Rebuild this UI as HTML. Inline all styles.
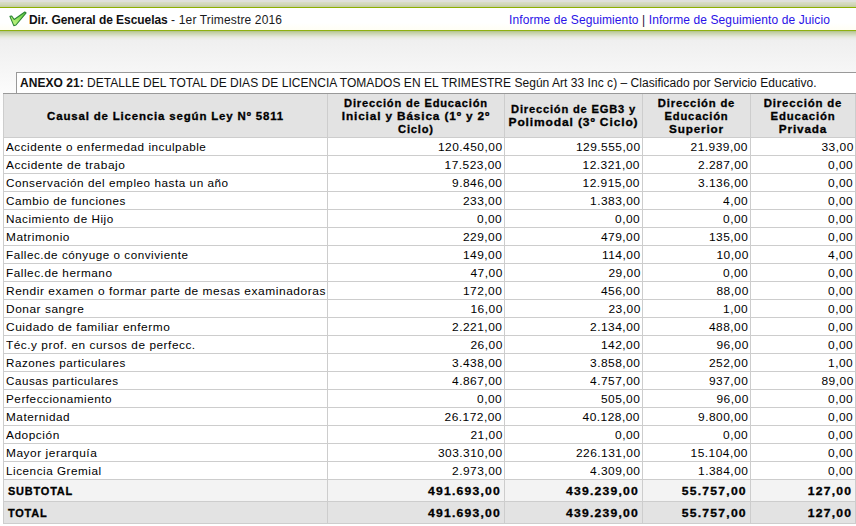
<!DOCTYPE html><html><head><meta charset="utf-8"><style>
*{margin:0;padding:0;box-sizing:border-box}
html,body{width:856px;height:526px;overflow:hidden}
body{position:relative;font-family:"Liberation Sans",sans-serif;color:#000;
background:linear-gradient(to bottom,#e0e1dd 0px,#dfe0da 1.5px,#d8dcc6 2.5px,#d1d7b9 4.5px,#c5cda6 6.5px,#c5cda6 7px,#eeeeee 37px,#f0f0f0 45px,#f6f6f6 70px,#fcfcfc 93px,#ffffff 140px)}
.bar{position:absolute;left:0;top:7px;width:856px;height:24px;background:linear-gradient(to bottom,#fff 0,#fff 15px,#fffef4 22px);border-top:1px solid #8db000;border-bottom:1px solid #8fb010}
.sh{position:absolute;left:0;top:31px;width:856px;height:9px;background:linear-gradient(to bottom,#b0c28a 0,#c3cfa6 1.5px,#d3dabf 3.5px,#e2e6d7 5.5px,#eaebe6 7px,#eeeeee 9px)}
.t{position:absolute;white-space:nowrap}
.title{left:29px;top:13px;font-size:12px;line-height:14px;color:#111}
.title span{color:#333}
.links{left:509px;top:13px;font-size:12px;line-height:14px;color:#3a1fd8;letter-spacing:0.1px}
.links .p{color:#4a0060}
.cap{position:absolute;left:16px;top:72px;width:840px;height:22px;background:#fff;border-left:1px solid #999;border-top:1px solid #999}
.capt{left:20px;top:76px;font-size:12px;line-height:14px;color:#111}
.tb{position:absolute;left:3px;top:93px;width:853px;height:431px;background:#fff;border-top:1px solid #999}
.hd{position:absolute;left:3px;top:94px;width:853px;height:43px;background:#e3e3e3}
.sub{position:absolute;left:3px;top:480px;width:853px;height:21px;background:#f3f3f3}
.tot{position:absolute;left:3px;top:502px;width:853px;height:21px;background:#e3e3e3}
.vl{position:absolute;width:1px;background:#cdcdcd}
.hl{position:absolute;height:1px;background:#cdcdcd}
.c{position:absolute;font-size:11px;line-height:13px;white-space:nowrap;color:#111;letter-spacing:var(--ls,0.5px)}
.r{text-align:right}
.h{font-weight:bold;text-align:center}
.b{font-weight:bold}
.capt{letter-spacing:0.035px}.title b{letter-spacing:-0.06px}.title span{letter-spacing:0.15px}.links{color:#2a12e6}.links .p{color:#3a1050}.c{color:#000}.b,.h{-webkit-text-stroke:0.3px #000}.c.r{--ls:0.45px}.c.h{--ls:0.8px}.c.r.b{--ls:1.1px}.c.b{--ls:0.8px}.title span{color:#1a1a1a}.links .p{color:#2a0a3a}</style></head><body>
<div class="sh"></div><div class="bar"></div>
<svg style="position:absolute;left:8px;top:10px" width="20" height="18" viewBox="0 0 20 18"><defs><linearGradient id="g" x1="0" y1="1" x2="1" y2="0"><stop offset="0" stop-color="#d0f58a"/><stop offset="0.45" stop-color="#9ee866"/><stop offset="1" stop-color="#55c83a"/></linearGradient></defs><path d="M1.9 6.4 L3.7 6.0 L6.2 9.5 L16.8 2.0 L18.1 2.9 L8.0 15.0 L5.8 15.6 Z" fill="url(#g)" stroke="#2b8534" stroke-width="1.1" stroke-linejoin="round"/></svg>
<div class="t title"><b>Dir. General de Escuelas</b><span> - 1er Trimestre 2016</span></div>
<div class="t links">Informe de Seguimiento <span class="p">|</span> Informe de Seguimiento de Juicio</div>
<div class="cap"></div><div class="t capt"><b>ANEXO 21:</b> DETALLE DEL TOTAL DE DIAS DE LICENCIA TOMADOS EN EL TRIMESTRE Según Art 33 Inc c) – Clasificado por Servicio Educativo.</div>
<div class="tb"></div><div class="hd"></div><div class="sub"></div><div class="tot"></div>
<div class="vl" style="left:3px;top:94px;height:430px"></div>
<div class="vl" style="left:327px;top:94px;height:430px"></div>
<div class="vl" style="left:504px;top:94px;height:430px"></div>
<div class="vl" style="left:642px;top:94px;height:430px"></div>
<div class="vl" style="left:750px;top:94px;height:430px"></div>
<div class="vl" style="left:855px;top:94px;height:430px"></div>
<div class="hl" style="left:3px;top:137px;width:853px"></div>
<div class="hl" style="left:3px;top:155px;width:853px"></div>
<div class="hl" style="left:3px;top:173px;width:853px"></div>
<div class="hl" style="left:3px;top:191px;width:853px"></div>
<div class="hl" style="left:3px;top:209px;width:853px"></div>
<div class="hl" style="left:3px;top:227px;width:853px"></div>
<div class="hl" style="left:3px;top:245px;width:853px"></div>
<div class="hl" style="left:3px;top:263px;width:853px"></div>
<div class="hl" style="left:3px;top:281px;width:853px"></div>
<div class="hl" style="left:3px;top:299px;width:853px"></div>
<div class="hl" style="left:3px;top:317px;width:853px"></div>
<div class="hl" style="left:3px;top:335px;width:853px"></div>
<div class="hl" style="left:3px;top:353px;width:853px"></div>
<div class="hl" style="left:3px;top:371px;width:853px"></div>
<div class="hl" style="left:3px;top:389px;width:853px"></div>
<div class="hl" style="left:3px;top:407px;width:853px"></div>
<div class="hl" style="left:3px;top:425px;width:853px"></div>
<div class="hl" style="left:3px;top:443px;width:853px"></div>
<div class="hl" style="left:3px;top:461px;width:853px"></div>
<div class="hl" style="left:3px;top:479px;width:853px"></div>
<div class="hl" style="left:3px;top:501px;width:853px"></div>
<div class="hl" style="left:3px;top:523px;width:853px"></div>
<div class="c h" style="left:4.25px;width:323px;top:110px;transform:scaleX(1.0424)">Causal de Licencia según Ley Nº 5811</div>
<div class="c h" style="left:328.25px;width:176px;top:97px;transform:scaleX(1.0111)">Dirección de Educación</div>
<div class="c h" style="left:328.25px;width:176px;top:110px;transform:scaleX(1.0747)">Inicial y Básica (1º y 2º</div>
<div class="c h" style="left:328.25px;width:176px;top:123px;transform:scaleX(1.0117)">Ciclo)</div>
<div class="c h" style="left:505.25px;width:137px;top:103px;transform:scaleX(1.0116)">Dirección de EGB3 y</div>
<div class="c h" style="left:505.25px;width:137px;top:116px;transform:scaleX(1.0917)">Polimodal (3º Ciclo)</div>
<div class="c h" style="left:643.25px;width:107px;top:97px;transform:scaleX(1.0237)">Dirección de</div>
<div class="c h" style="left:643.25px;width:107px;top:110px;transform:scaleX(1.0167)">Educación</div>
<div class="c h" style="left:643.25px;width:107px;top:123px;transform:scaleX(1.0656)">Superior</div>
<div class="c h" style="left:751.25px;width:104px;top:97px;transform:scaleX(1.0375)">Dirección de</div>
<div class="c h" style="left:751.25px;width:104px;top:110px;transform:scaleX(1.0326)">Educación</div>
<div class="c h" style="left:751.25px;width:104px;top:123px;transform:scaleX(1.0688)">Privada</div>
<div class="c" style="left:6px;top:141px;transform-origin:0 0;transform:scaleX(1.0641)">Accidente o enfermedad inculpable</div>
<div class="c r" style="right:353.60px;top:141px;transform-origin:100% 0;transform:scaleX(1.0849)">120.450,00</div>
<div class="c r" style="right:215.60px;top:141px;transform-origin:100% 0;transform:scaleX(1.0849)">129.555,00</div>
<div class="c r" style="right:107.60px;top:141px;transform-origin:100% 0;transform:scaleX(1.0849)">21.939,00</div>
<div class="c r" style="right:2.60px;top:141px;transform-origin:100% 0;transform:scaleX(1.0849)">33,00</div>
<div class="c" style="left:6px;top:159px;transform-origin:0 0;transform:scaleX(1.0828)">Accidente de trabajo</div>
<div class="c r" style="right:353.60px;top:159px;transform-origin:100% 0;transform:scaleX(1.0849)">17.523,00</div>
<div class="c r" style="right:215.60px;top:159px;transform-origin:100% 0;transform:scaleX(1.0849)">12.321,00</div>
<div class="c r" style="right:107.60px;top:159px;transform-origin:100% 0;transform:scaleX(1.0849)">2.287,00</div>
<div class="c r" style="right:2.60px;top:159px;transform-origin:100% 0;transform:scaleX(1.0849)">0,00</div>
<div class="c" style="left:6px;top:177px;transform-origin:0 0;transform:scaleX(1.0665)">Conservación del empleo hasta un año</div>
<div class="c r" style="right:353.60px;top:177px;transform-origin:100% 0;transform:scaleX(1.0849)">9.846,00</div>
<div class="c r" style="right:215.60px;top:177px;transform-origin:100% 0;transform:scaleX(1.0849)">12.915,00</div>
<div class="c r" style="right:107.60px;top:177px;transform-origin:100% 0;transform:scaleX(1.0849)">3.136,00</div>
<div class="c r" style="right:2.60px;top:177px;transform-origin:100% 0;transform:scaleX(1.0849)">0,00</div>
<div class="c" style="left:6px;top:195px;transform-origin:0 0;transform:scaleX(1.0635)">Cambio de funciones</div>
<div class="c r" style="right:353.60px;top:195px;transform-origin:100% 0;transform:scaleX(1.0849)">233,00</div>
<div class="c r" style="right:215.60px;top:195px;transform-origin:100% 0;transform:scaleX(1.0849)">1.383,00</div>
<div class="c r" style="right:107.60px;top:195px;transform-origin:100% 0;transform:scaleX(1.0849)">4,00</div>
<div class="c r" style="right:2.60px;top:195px;transform-origin:100% 0;transform:scaleX(1.0849)">0,00</div>
<div class="c" style="left:6px;top:213px;transform-origin:0 0;transform:scaleX(1.0636)">Nacimiento de Hijo</div>
<div class="c r" style="right:353.60px;top:213px;transform-origin:100% 0;transform:scaleX(1.0849)">0,00</div>
<div class="c r" style="right:215.60px;top:213px;transform-origin:100% 0;transform:scaleX(1.0849)">0,00</div>
<div class="c r" style="right:107.60px;top:213px;transform-origin:100% 0;transform:scaleX(1.0849)">0,00</div>
<div class="c r" style="right:2.60px;top:213px;transform-origin:100% 0;transform:scaleX(1.0849)">0,00</div>
<div class="c" style="left:6px;top:231px;transform-origin:0 0;transform:scaleX(1.0774)">Matrimonio</div>
<div class="c r" style="right:353.60px;top:231px;transform-origin:100% 0;transform:scaleX(1.0849)">229,00</div>
<div class="c r" style="right:215.60px;top:231px;transform-origin:100% 0;transform:scaleX(1.0849)">479,00</div>
<div class="c r" style="right:107.60px;top:231px;transform-origin:100% 0;transform:scaleX(1.0849)">135,00</div>
<div class="c r" style="right:2.60px;top:231px;transform-origin:100% 0;transform:scaleX(1.0849)">0,00</div>
<div class="c" style="left:6px;top:249px;transform-origin:0 0;transform:scaleX(1.0609)">Fallec.de cónyuge o conviviente</div>
<div class="c r" style="right:353.60px;top:249px;transform-origin:100% 0;transform:scaleX(1.0849)">149,00</div>
<div class="c r" style="right:215.60px;top:249px;transform-origin:100% 0;transform:scaleX(1.0849)">114,00</div>
<div class="c r" style="right:107.60px;top:249px;transform-origin:100% 0;transform:scaleX(1.0849)">10,00</div>
<div class="c r" style="right:2.60px;top:249px;transform-origin:100% 0;transform:scaleX(1.0849)">4,00</div>
<div class="c" style="left:6px;top:267px;transform-origin:0 0;transform:scaleX(1.0690)">Fallec.de hermano</div>
<div class="c r" style="right:353.60px;top:267px;transform-origin:100% 0;transform:scaleX(1.0849)">47,00</div>
<div class="c r" style="right:215.60px;top:267px;transform-origin:100% 0;transform:scaleX(1.0849)">29,00</div>
<div class="c r" style="right:107.60px;top:267px;transform-origin:100% 0;transform:scaleX(1.0849)">0,00</div>
<div class="c r" style="right:2.60px;top:267px;transform-origin:100% 0;transform:scaleX(1.0849)">0,00</div>
<div class="c" style="left:6px;top:285px;transform-origin:0 0;transform:scaleX(1.0858)">Rendir examen o formar parte de mesas examinadoras</div>
<div class="c r" style="right:353.60px;top:285px;transform-origin:100% 0;transform:scaleX(1.0849)">172,00</div>
<div class="c r" style="right:215.60px;top:285px;transform-origin:100% 0;transform:scaleX(1.0849)">456,00</div>
<div class="c r" style="right:107.60px;top:285px;transform-origin:100% 0;transform:scaleX(1.0849)">88,00</div>
<div class="c r" style="right:2.60px;top:285px;transform-origin:100% 0;transform:scaleX(1.0849)">0,00</div>
<div class="c" style="left:6px;top:303px;transform-origin:0 0;transform:scaleX(1.0809)">Donar sangre</div>
<div class="c r" style="right:353.60px;top:303px;transform-origin:100% 0;transform:scaleX(1.0849)">16,00</div>
<div class="c r" style="right:215.60px;top:303px;transform-origin:100% 0;transform:scaleX(1.0849)">23,00</div>
<div class="c r" style="right:107.60px;top:303px;transform-origin:100% 0;transform:scaleX(1.0849)">1,00</div>
<div class="c r" style="right:2.60px;top:303px;transform-origin:100% 0;transform:scaleX(1.0849)">0,00</div>
<div class="c" style="left:6px;top:321px;transform-origin:0 0;transform:scaleX(1.0842)">Cuidado de familiar enfermo</div>
<div class="c r" style="right:353.60px;top:321px;transform-origin:100% 0;transform:scaleX(1.0849)">2.221,00</div>
<div class="c r" style="right:215.60px;top:321px;transform-origin:100% 0;transform:scaleX(1.0849)">2.134,00</div>
<div class="c r" style="right:107.60px;top:321px;transform-origin:100% 0;transform:scaleX(1.0849)">488,00</div>
<div class="c r" style="right:2.60px;top:321px;transform-origin:100% 0;transform:scaleX(1.0849)">0,00</div>
<div class="c" style="left:6px;top:339px;transform-origin:0 0;transform:scaleX(1.0736)">Téc.y prof. en cursos de perfecc.</div>
<div class="c r" style="right:353.60px;top:339px;transform-origin:100% 0;transform:scaleX(1.0849)">26,00</div>
<div class="c r" style="right:215.60px;top:339px;transform-origin:100% 0;transform:scaleX(1.0849)">142,00</div>
<div class="c r" style="right:107.60px;top:339px;transform-origin:100% 0;transform:scaleX(1.0849)">96,00</div>
<div class="c r" style="right:2.60px;top:339px;transform-origin:100% 0;transform:scaleX(1.0849)">0,00</div>
<div class="c" style="left:6px;top:357px;transform-origin:0 0;transform:scaleX(1.0565)">Razones particulares</div>
<div class="c r" style="right:353.60px;top:357px;transform-origin:100% 0;transform:scaleX(1.0849)">3.438,00</div>
<div class="c r" style="right:215.60px;top:357px;transform-origin:100% 0;transform:scaleX(1.0849)">3.858,00</div>
<div class="c r" style="right:107.60px;top:357px;transform-origin:100% 0;transform:scaleX(1.0849)">252,00</div>
<div class="c r" style="right:2.60px;top:357px;transform-origin:100% 0;transform:scaleX(1.0849)">1,00</div>
<div class="c" style="left:6px;top:375px;transform-origin:0 0;transform:scaleX(1.0557)">Causas particulares</div>
<div class="c r" style="right:353.60px;top:375px;transform-origin:100% 0;transform:scaleX(1.0849)">4.867,00</div>
<div class="c r" style="right:215.60px;top:375px;transform-origin:100% 0;transform:scaleX(1.0849)">4.757,00</div>
<div class="c r" style="right:107.60px;top:375px;transform-origin:100% 0;transform:scaleX(1.0849)">937,00</div>
<div class="c r" style="right:2.60px;top:375px;transform-origin:100% 0;transform:scaleX(1.0849)">89,00</div>
<div class="c" style="left:6px;top:393px;transform-origin:0 0;transform:scaleX(1.0650)">Perfeccionamiento</div>
<div class="c r" style="right:353.60px;top:393px;transform-origin:100% 0;transform:scaleX(1.0849)">0,00</div>
<div class="c r" style="right:215.60px;top:393px;transform-origin:100% 0;transform:scaleX(1.0849)">505,00</div>
<div class="c r" style="right:107.60px;top:393px;transform-origin:100% 0;transform:scaleX(1.0849)">96,00</div>
<div class="c r" style="right:2.60px;top:393px;transform-origin:100% 0;transform:scaleX(1.0849)">0,00</div>
<div class="c" style="left:6px;top:411px;transform-origin:0 0;transform:scaleX(1.0674)">Maternidad</div>
<div class="c r" style="right:353.60px;top:411px;transform-origin:100% 0;transform:scaleX(1.0849)">26.172,00</div>
<div class="c r" style="right:215.60px;top:411px;transform-origin:100% 0;transform:scaleX(1.0849)">40.128,00</div>
<div class="c r" style="right:107.60px;top:411px;transform-origin:100% 0;transform:scaleX(1.0849)">9.800,00</div>
<div class="c r" style="right:2.60px;top:411px;transform-origin:100% 0;transform:scaleX(1.0849)">0,00</div>
<div class="c" style="left:6px;top:429px;transform-origin:0 0;transform:scaleX(1.0783)">Adopción</div>
<div class="c r" style="right:353.60px;top:429px;transform-origin:100% 0;transform:scaleX(1.0849)">21,00</div>
<div class="c r" style="right:215.60px;top:429px;transform-origin:100% 0;transform:scaleX(1.0849)">0,00</div>
<div class="c r" style="right:107.60px;top:429px;transform-origin:100% 0;transform:scaleX(1.0849)">0,00</div>
<div class="c r" style="right:2.60px;top:429px;transform-origin:100% 0;transform:scaleX(1.0849)">0,00</div>
<div class="c" style="left:6px;top:447px;transform-origin:0 0;transform:scaleX(1.0808)">Mayor jerarquía</div>
<div class="c r" style="right:353.60px;top:447px;transform-origin:100% 0;transform:scaleX(1.0849)">303.310,00</div>
<div class="c r" style="right:215.60px;top:447px;transform-origin:100% 0;transform:scaleX(1.0849)">226.131,00</div>
<div class="c r" style="right:107.60px;top:447px;transform-origin:100% 0;transform:scaleX(1.0849)">15.104,00</div>
<div class="c r" style="right:2.60px;top:447px;transform-origin:100% 0;transform:scaleX(1.0849)">0,00</div>
<div class="c" style="left:6px;top:465px;transform-origin:0 0;transform:scaleX(1.0637)">Licencia Gremial</div>
<div class="c r" style="right:353.60px;top:465px;transform-origin:100% 0;transform:scaleX(1.0849)">2.973,00</div>
<div class="c r" style="right:215.60px;top:465px;transform-origin:100% 0;transform:scaleX(1.0849)">4.309,00</div>
<div class="c r" style="right:107.60px;top:465px;transform-origin:100% 0;transform:scaleX(1.0849)">1.384,00</div>
<div class="c r" style="right:2.60px;top:465px;transform-origin:100% 0;transform:scaleX(1.0849)">0,00</div>
<div class="c b" style="left:8px;top:485px;transform-origin:0 0;transform:scaleX(0.9959)">SUBTOTAL</div>
<div class="c r b" style="right:354.80px;top:485px;transform-origin:100% 0;transform:scaleX(1.1053)">491.693,00</div>
<div class="c r b" style="right:216.80px;top:485px;transform-origin:100% 0;transform:scaleX(1.1053)">439.239,00</div>
<div class="c r b" style="right:108.80px;top:485px;transform-origin:100% 0;transform:scaleX(1.1053)">55.757,00</div>
<div class="c r b" style="right:3.80px;top:485px;transform-origin:100% 0;transform:scaleX(1.1053)">127,00</div>
<div class="c b" style="left:8px;top:507px;transform-origin:0 0;transform:scaleX(0.9952)">TOTAL</div>
<div class="c r b" style="right:354.80px;top:507px;transform-origin:100% 0;transform:scaleX(1.1053)">491.693,00</div>
<div class="c r b" style="right:216.80px;top:507px;transform-origin:100% 0;transform:scaleX(1.1053)">439.239,00</div>
<div class="c r b" style="right:108.80px;top:507px;transform-origin:100% 0;transform:scaleX(1.1053)">55.757,00</div>
<div class="c r b" style="right:3.80px;top:507px;transform-origin:100% 0;transform:scaleX(1.1053)">127,00</div>
</body></html>
